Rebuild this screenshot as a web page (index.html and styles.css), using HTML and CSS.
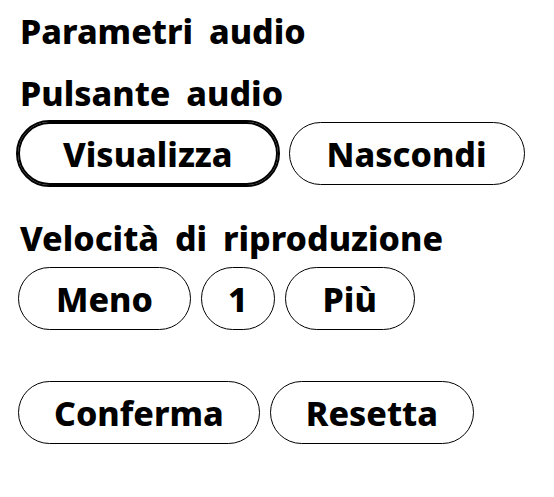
FILE: index.html
```html
<!DOCTYPE html>
<html lang="it">
<head>
<meta charset="utf-8">
<title>Parametri audio</title>
<link rel="stylesheet" href="styles.css">
</head>
<body>
<main class="panel">
  <h2 class="title">Parametri audio</h2>
  <section class="group">
    <h3 class="label">Pulsante audio</h3>
    <div class="row">
      <button class="btn pressed" type="button">Visualizza</button>
      <button class="btn" type="button">Nascondi</button>
    </div>
  </section>
  <section class="group speed">
    <h3 class="label">Velocità di riproduzione</h3>
    <div class="row">
      <button class="btn" type="button">Meno</button>
      <span class="btn value">1</span>
      <button class="btn" type="button">Più</button>
    </div>
  </section>
  <div class="row actions">
    <button class="btn" type="button">Conferma</button>
    <button class="btn" type="button">Resetta</button>
  </div>
</main>
</body>
</html>
```

FILE: styles.css
```css
html, body {
  margin: 0;
  padding: 0;
  background: #fff;
}
body {
  font-family: "Noto Sans", "Open Sans", sans-serif;
  font-weight: 800;
  color: #000;
}
.panel {
  padding: 11px 18px 0 18px;
}
.title, .label {
  margin: 0;
  padding-left: 2px;
  font-size: 34px;
  line-height: 40px;
  font-weight: 800;
  word-spacing: 7px;
}
.group {
  margin-top: 22px;
}
.group .row {
  margin-top: 9px;
}
.speed {
  margin-top: 33px;
}
.row {
  display: flex;
  gap: 10px;
  align-items: center;
}
.actions {
  margin-top: 51px;
}
.btn {
  box-sizing: border-box;
  display: inline-flex;
  align-items: center;
  justify-content: center;
  height: 63px;
  padding: 0 37px;
  border: 1px solid #000;
  border-radius: 32px;
  background: #fff;
  font-family: inherit;
  font-weight: 800;
  font-size: 34px;
  line-height: 40px;
  color: #000;
}
.actions .btn {
  padding: 0 35px;
}
.pressed {
  padding: 0 43px;
  border-width: 2px;
  outline: 2px solid #000;
  margin-right: 1px;
}
.value {
  padding: 0 26px;
}
```
